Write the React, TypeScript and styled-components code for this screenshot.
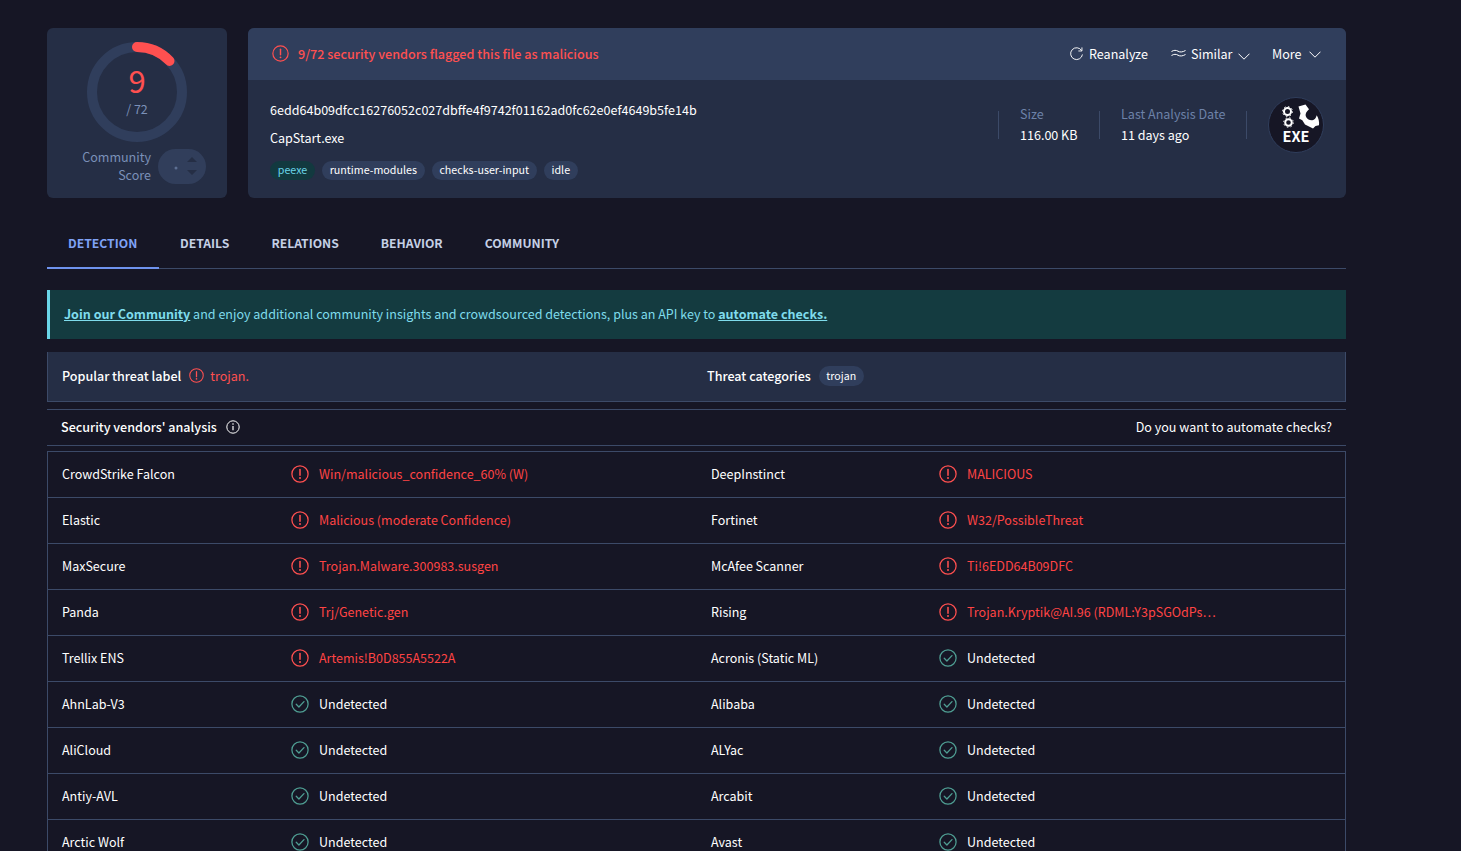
import React from "react";
import styled, { createGlobalStyle } from "styled-components";

const Global = createGlobalStyle`
  html, body { margin: 0; padding: 0; background: #161625; height: 851px; overflow: hidden; }
  body { font-family: "Noto Sans CJK JP", "Noto Sans", sans-serif; font-size: 12.55px; color: #fff; }
  * { box-sizing: border-box; }
`;

const Page = styled.div`
  position: relative;
  width: 1461px;
  height: 851px;
  overflow: hidden;
  background: #161625;
`;

const ScoreCard = styled.div`
  position: absolute;
  left: 47px;
  top: 28px;
  width: 180px;
  height: 170px;
  border-radius: 6px;
  background: #252e45;
`;

const Ring = styled.svg`
  position: absolute;
  left: 40px;
  top: 14px;
`;

const ScoreNum = styled.div`
  position: absolute;
  left: 40px;
  width: 100px;
  top: 34px;
  text-align: center;
  font-size: 31px;
  line-height: 35px;
  color: #ff5050;
`;

const ScoreOf = styled.div`
  position: absolute;
  left: 40px;
  width: 100px;
  top: 72px;
  text-align: center;
  font-size: 12.5px;
  line-height: 18px;
  color: #7b90b8;
`;

const CommunityLabel = styled.div`
  position: absolute;
  right: 76px;
  top: 120px;
  text-align: right;
  font-size: 12.55px;
  line-height: 18px;
  color: #7b90b8;
`;

const Pill = styled.div`
  position: absolute;
  left: 111px;
  top: 121px;
  width: 48px;
  height: 35px;
  border-radius: 18px;
  background: #313e5b;
`;

const HeaderCard = styled.div`
  position: absolute;
  left: 248px;
  top: 28px;
  width: 1098px;
  height: 170px;
  border-radius: 6px;
  overflow: hidden;
  background: #252e45;
`;

const HeaderTop = styled.div`
  position: relative;
  height: 52px;
  background: #303e5c;
`;

const Flag = styled.div`
  position: absolute;
  left: 24px;
  top: 0;
  height: 50px;
  display: flex;
  align-items: center;
  gap: 9px;
  font-size: 12.6px;
  font-weight: 500;
  color: #ff5050;
`;

const Action = styled.div<{ $x: number }>`
  position: absolute;
  left: ${(p) => p.$x}px;
  top: 0;
  height: 50px;
  display: flex;
  align-items: center;
  gap: 5px;
  font-size: 12.55px;
  color: #fff;
`;

const Hash = styled.div`
  position: absolute;
  left: 22px;
  top: 72px;
  font-size: 12.55px;
  line-height: 20px;
  color: #fff;
`;

const FileName = styled.div`
  position: absolute;
  left: 22px;
  top: 100px;
  font-size: 12.55px;
  line-height: 20px;
  color: #fff;
`;

const Tags = styled.div`
  position: absolute;
  left: 22px;
  top: 133px;
  display: flex;
  gap: 7px;
`;

const Tag = styled.span<{ $accent?: boolean }>`
  height: 19px;
  padding: 0 7.75px;
  border-radius: 10px;
  font-size: 10.7px;
  line-height: 18px;
  background: ${(p) => (p.$accent ? "#12393f" : "#303e5c")};
  color: ${(p) => (p.$accent ? "#6ad5e8" : "#fff")};
`;

const Divider = styled.div<{ $x: number }>`
  position: absolute;
  left: ${(p) => p.$x}px;
  top: 83px;
  width: 1px;
  height: 28px;
  background: #3c4a68;
`;

const MetaLabel = styled.div<{ $x: number }>`
  position: absolute;
  left: ${(p) => p.$x}px;
  top: 76px;
  font-size: 12.55px;
  line-height: 20px;
  color: #6d82a8;
`;

const MetaValue = styled.div<{ $x: number }>`
  position: absolute;
  left: ${(p) => p.$x}px;
  top: 97px;
  font-size: 12.55px;
  line-height: 20px;
  color: #fff;
`;

const ExeBadge = styled.div`
  position: absolute;
  left: 1020px;
  top: 69px;
  width: 56px;
  height: 56px;
  border-radius: 50%;
  border: 1px solid #303e5c;
  background: #161625;
`;

const ExeText = styled.div`
  position: absolute;
  left: 0;
  right: 0;
  top: 28px;
  text-align: center;
  font-size: 14.5px;
  line-height: 20px;
  font-weight: 700;
  color: #fff;
`;

const TabBar = styled.div`
  position: absolute;
  left: 47px;
  top: 220px;
  width: 1299px;
  height: 49px;
  display: flex;
  border-bottom: 1px solid #3c4a68;
`;

const TabItem = styled.div<{ $active?: boolean }>`
  height: 49px;
  min-width: ${(p) => (p.$active ? "112px" : "0")};
  padding: 0 21px 2px;
  display: flex;
  align-items: center;
  font-size: 12.2px;
  font-weight: 700;
  color: ${(p) => (p.$active ? "#7fa2f5" : "#c5d0e6")};
  border-bottom: 2px solid ${(p) => (p.$active ? "#6f93ee" : "transparent")};
`;

const Banner = styled.div`
  position: absolute;
  left: 47px;
  top: 290px;
  width: 1299px;
  height: 49px;
  padding: 0 0 2px 14px;
  display: flex;
  align-items: center;
  border-left: 3px solid #6ad5e8;
  background: #143b40;
  font-size: 12.54px;
  color: #7fdcec;
  white-space: pre;
`;

const BannerLink = styled.span`
  font-weight: 700;
  text-decoration: underline;
`;

const ThreatBar = styled.div`
  position: absolute;
  left: 47px;
  top: 352px;
  width: 1299px;
  height: 50px;
  background: #252e45;
  border: 1px solid #3c4a68;
  border-top: none;
`;

const ThreatTitle = styled.div<{ $x: number }>`
  position: absolute;
  left: ${(p) => p.$x}px;
  top: 0;
  height: 47px;
  display: flex;
  align-items: center;
  gap: 8px;
  font-size: 12.55px;
  font-weight: 500;
  color: #fff;
`;

const ThreatValue = styled.span`
  margin-left: -2px;
  font-weight: 400;
  color: #ff5050;
`;

const ThreatChip = styled.span`
  height: 20px;
  padding: 0 7.5px;
  border-radius: 10px;
  font-size: 10.6px;
  font-weight: 400;
  line-height: 19px;
  background: #303e5c;
`;

const AnalysisBar = styled.div`
  position: absolute;
  left: 47px;
  top: 409px;
  width: 1299px;
  height: 37px;
  border-top: 1px solid #3c4a68;
  border-bottom: 1px solid #3c4a68;
  display: flex;
  align-items: center;
  justify-content: space-between;
  padding: 0 14px 2px;
  font-size: 12.55px;
`;

const AnalysisTitle = styled.div`
  display: flex;
  align-items: center;
  gap: 9px;
  font-weight: 500;
`;

const VendorTable = styled.div`
  position: absolute;
  left: 47px;
  top: 451px;
  width: 1299px;
  border: 1px solid #3c4a68;
`;

const Row = styled.div`
  position: relative;
  height: 46px;
  border-bottom: 1px solid #3c4a68;
`;

const VendorName = styled.div<{ $x: number }>`
  position: absolute;
  left: ${(p) => p.$x}px;
  top: 0;
  height: 43px;
  line-height: 43px;
  font-size: 12.52px;
  color: #fff;
`;

const Verdict = styled.div<{ $x: number; $bad: boolean }>`
  position: absolute;
  left: ${(p) => p.$x}px;
  top: 0;
  height: 43px;
  display: flex;
  align-items: center;
  gap: 10px;
  font-size: 12.52px;
  color: ${(p) => (p.$bad ? "#ff4444" : "#fff")};
`;

const Alert = ({ size = 18, color = "#ff5050" }: { size?: number; color?: string }) => (
  <svg width={size} height={size} viewBox="0 0 20 20" fill="none">
    <circle cx="10" cy="10" r="9" stroke={color} strokeWidth="1.400" />
    <path d="M10 5v6.500" stroke={color} strokeWidth="1.700" strokeLinecap="round" />
    <circle cx="10" cy="14.500" r="1.100" fill={color} />
  </svg>
);

const Check = () => (
  <svg width="18" height="18" viewBox="0 0 20 20" fill="none">
    <circle cx="10" cy="10" r="9" stroke="#4f9e93" strokeWidth="1.400" />
    <path d="M5.800 10.300l3 3 5.600-6" stroke="#4f9e93" strokeWidth="1.400" strokeLinecap="round" strokeLinejoin="round" />
  </svg>
);

const ChevronSvg = styled.svg<{ $dy: number; $ml?: number }>`
  margin-left: ${(p) => p.$ml ?? 0}px;
  transform: translateY(${(p) => p.$dy}px);
`;

const Chevron = ({ dy = 0, ml = 0 }: { dy?: number; ml?: number }) => (
  <ChevronSvg $dy={dy} $ml={ml} width="12" height="7" viewBox="0 0 12 7" fill="none">
    <path d="M.5.7L6 6.200 11.500.7" stroke="#fff" strokeWidth="1" />
  </ChevronSvg>
);

const rows: [string, string, string, string][] = [
  ["CrowdStrike Falcon", "Win/malicious_confidence_60% (W)", "DeepInstinct", "MALICIOUS"],
  ["Elastic", "Malicious (moderate Confidence)", "Fortinet", "W32/PossibleThreat"],
  ["MaxSecure", "Trojan.Malware.300983.susgen", "McAfee Scanner", "Ti!6EDD64B09DFC"],
  ["Panda", "Trj/Genetic.gen", "Rising", "Trojan.Kryptik@AI.96 (RDML:Y3pSGOdPs…"],
  ["Trellix ENS", "Artemis!B0D855A5522A", "Acronis (Static ML)", "Undetected"],
  ["AhnLab-V3", "Undetected", "Alibaba", "Undetected"],
  ["AliCloud", "Undetected", "ALYac", "Undetected"],
  ["Antiy-AVL", "Undetected", "Arcabit", "Undetected"],
  ["Arctic Wolf", "Undetected", "Avast", "Undetected"],
];

const VerdictCell = ({ x, text }: { x: number; text: string }) => {
  const bad = text !== "Undetected";
  return (
    <Verdict $x={x} $bad={bad}>
      {bad ? <Alert /> : <Check />}
      <span>{text}</span>
    </Verdict>
  );
};

export default function App() {
  return (
    <Page>
      <Global />
      <ScoreCard>
        <Ring width="100" height="100" viewBox="0 0 100 100" fill="none">
          <circle cx="50" cy="50" r="45" stroke="#303e5c" strokeWidth="10" />
          <path d="M50 5A45 45 0 0 1 82.500 18.900" stroke="#ff5050" strokeWidth="10" strokeLinecap="round" />
        </Ring>
        <ScoreNum>9</ScoreNum>
        <ScoreOf>/ 72</ScoreOf>
        <CommunityLabel>
          Community
          <br />
          Score
        </CommunityLabel>
        <Pill>
          <svg width="48" height="35" viewBox="0 0 48 35">
            <circle cx="18" cy="19" r="1.500" fill="#5d6f92" />
            <path d="M29 13l5-5 5 5z M29 21l5 5 5-5z" fill="#252e45" />
          </svg>
        </Pill>
      </ScoreCard>

      <HeaderCard>
        <HeaderTop>
          <Flag>
            <Alert size={17} />
            <span>9/72 security vendors flagged this file as malicious</span>
          </Flag>
          <Action $x={821}>
            <svg width="15" height="15" viewBox="0 0 16 16" fill="none">
              <path d="M13.500 5A6.300 6.300 0 1 0 14.300 9" stroke="#fff" strokeWidth="1" />
              <path d="M13.800 1.500V5.300H10" stroke="#fff" strokeWidth="1" />
            </svg>
            <span>Reanalyze</span>
          </Action>
          <Action $x={923}>
            <svg width="15" height="10" viewBox="0 0 15 10" fill="none">
              <path d="M.5 3.500C3 2 5 2 7 3.200s4.500 1 7.500-.7M.5 7.500C3 6 5 6 7 7.200s4.500 1 7.500-.7" stroke="#fff" strokeWidth="1" />
            </svg>
            <span>Similar</span>
            <Chevron dy={3} />
          </Action>
          <Action $x={1024}>
            <span>More</span>
            <Chevron dy={1} ml={3} />
          </Action>
        </HeaderTop>
        <Hash>6edd64b09dfcc16276052c027dbffe4f9742f01162ad0fc62e0ef4649b5fe14b</Hash>
        <FileName>CapStart.exe</FileName>
        <Tags>
          <Tag $accent>peexe</Tag>
          <Tag>runtime-modules</Tag>
          <Tag>checks-user-input</Tag>
          <Tag>idle</Tag>
        </Tags>
        <Divider $x={750} />
        <MetaLabel $x={772}>Size</MetaLabel>
        <MetaValue $x={772}>116.00 KB</MetaValue>
        <Divider $x={851} />
        <MetaLabel $x={873}>Last Analysis Date</MetaLabel>
        <MetaValue $x={873}>11 days ago</MetaValue>
        <Divider $x={998} />
        <ExeBadge>
          <svg width="54" height="54" viewBox="0 0 54 54" fill="none">
            <circle cx="18.500" cy="13.500" r="3.500" stroke="#fff" strokeWidth="2" />
            <circle cx="19.500" cy="24.500" r="3.300" stroke="#fff" strokeWidth="2" />
            <circle cx="18.500" cy="13.500" r="5" stroke="#fff" strokeWidth="1" strokeDasharray="1.500 2.400" />
            <circle cx="19.500" cy="24.500" r="4.800" stroke="#fff" strokeWidth="1" strokeDasharray="1.500 2.300" />
            <path d="M29.500 8.500L36.500 6.500 40 11.300C37.500 13.500 36.300 15.500 36.700 18 37.500 21 40.500 22.500 43.300 22.300 45.500 22 47 20 47.700 17.300 49.500 20 50.500 24 50 27.300L46.500 28 44 30.500 40 28.500 36 26.500 33.300 22.300 30 20.500 31.500 15.500z" fill="#fff" />
          </svg>
          <ExeText>EXE</ExeText>
        </ExeBadge>
      </HeaderCard>

      <TabBar>
        <TabItem $active>DETECTION</TabItem>
        <TabItem>DETAILS</TabItem>
        <TabItem>RELATIONS</TabItem>
        <TabItem>BEHAVIOR</TabItem>
        <TabItem>COMMUNITY</TabItem>
      </TabBar>

      <Banner>
        <BannerLink>Join our Community</BannerLink>
        {" and enjoy additional community insights and crowdsourced detections, plus an API key to "}
        <BannerLink>automate checks.</BannerLink>
      </Banner>

      <ThreatBar>
        <ThreatTitle $x={14}>
          <span>Popular threat label</span>
          <Alert size={15} />
          <ThreatValue>trojan.</ThreatValue>
        </ThreatTitle>
        <ThreatTitle $x={659}>
          <span>Threat categories</span>
          <ThreatChip>trojan</ThreatChip>
        </ThreatTitle>
      </ThreatBar>

      <AnalysisBar>
        <AnalysisTitle>
          <span>Security vendors' analysis</span>
          <svg width="14" height="14" viewBox="0 0 14 14" fill="none">
            <circle cx="7" cy="7" r="6.200" stroke="#fff" strokeWidth="1" />
            <path d="M7 6v4.200" stroke="#fff" strokeWidth="1.200" />
            <circle cx="7" cy="4" r=".8" fill="#fff" />
          </svg>
        </AnalysisTitle>
        <span>Do you want to automate checks?</span>
      </AnalysisBar>

      <VendorTable>
        {rows.map((r) => (
          <Row key={r[0]}>
            <VendorName $x={14}>{r[0]}</VendorName>
            <VerdictCell x={243} text={r[1]} />
            <VendorName $x={663}>{r[2]}</VendorName>
            <VerdictCell x={891} text={r[3]} />
          </Row>
        ))}
      </VendorTable>
    </Page>
  );
}
